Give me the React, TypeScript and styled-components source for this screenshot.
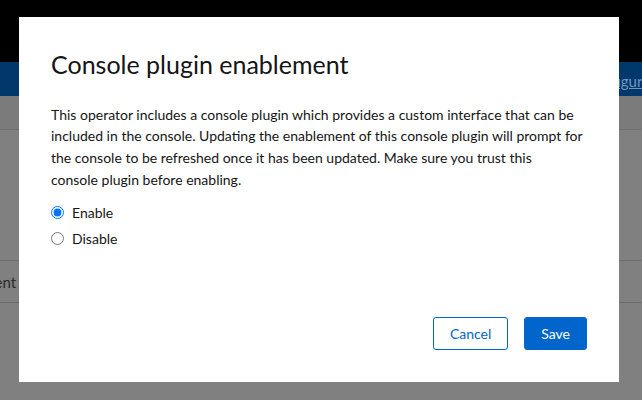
import styled, { createGlobalStyle } from 'styled-components';

const GlobalStyle = createGlobalStyle`
  html, body {
    margin: 0;
    padding: 0;
    height: 100%;
    overflow: hidden;
  }
  body {
    font-family: Lato, "Liberation Sans", sans-serif;
    color: #151515;
    background: #808080;
  }
`;

export default function App() {
  return (
    <>
      <GlobalStyle />
      <Page>
        <Masthead />
        <NavBar>
          <NavLink>Configure</NavLink>
        </NavBar>
        <Toolbar />
        <Spacer />
        <TableRow>
          <Cell>Deployment</Cell>
        </TableRow>
      </Page>

      <Backdrop>
        <Modal role="dialog" aria-labelledby="plugin-title">
          <Title id="plugin-title">Console plugin enablement</Title>
          <Body>
            This operator includes a console plugin which provides a custom
            interface that can be
            <br />
            included in the console. Updating the enablement of this console
            plugin will prompt for
            <br />
            the console to be refreshed once it has been updated. Make sure you
            trust this
            <br />
            console plugin before enabling.
          </Body>
          <RadioGroup>
            <RadioRow>
              <input type="radio" name="enablement" defaultChecked />
              <span>Enable</span>
            </RadioRow>
            <RadioRow>
              <input type="radio" name="enablement" />
              <span>Disable</span>
            </RadioRow>
          </RadioGroup>
          <Footer>
            <Button $variant="secondary">Cancel</Button>
            <Button $variant="primary">Save</Button>
          </Footer>
        </Modal>
      </Backdrop>
    </>
  );
}

const Page = styled.div`
  display: flex;
  flex-direction: column;
  height: 100vh;
  background: #808080;
`;

const Masthead = styled.header`
  height: 62px;
  background: #000;
`;

const NavBar = styled.nav`
  height: 34px;
  background: #00386c;
  display: flex;
  align-items: center;
  justify-content: flex-end;
  overflow: hidden;
`;

const NavLink = styled.a`
  font-size: 15px;
  color: #6f95c0;
  text-decoration: underline;
  margin-right: -8px;
  padding-top: 3px;
`;

const Toolbar = styled.div`
  height: 33px;
  background: #7b7b7b;
  border-bottom: 1px solid #6e6e6e;
`;

const Spacer = styled.div`
  height: 130px;
`;

const TableRow = styled.div`
  height: 41px;
  border-top: 1px solid #6c6c6c;
  border-bottom: 1px solid #6c6c6c;
  display: flex;
  align-items: center;
  overflow: hidden;
`;

const Cell = styled.span`
  font-size: 15px;
  color: #2a2a2a;
  margin-left: -65px;
`;

const Backdrop = styled.div`
  position: fixed;
  inset: 0;
  display: flex;
  align-items: flex-start;
  justify-content: flex-start;
  padding: 17px 0 0 19px;
`;

const Modal = styled.div`
  box-sizing: border-box;
  width: 600px;
  height: 365px;
  padding: 31px 32px 32px;
  background: #fff;
  display: flex;
  flex-direction: column;
`;

const Title = styled.h1`
  margin: 0;
  font-size: 25px;
  line-height: 1.3;
  font-weight: 400;
  color: #151515;
`;

const Body = styled.p`
  margin: 23px 0 0;
  font-size: 14px;
  line-height: 21.7px;
`;

const RadioGroup = styled.div`
  margin-top: 10px;
  display: flex;
  flex-direction: column;
  gap: 2px;
`;

const RadioRow = styled.label`
  display: flex;
  align-items: center;
  gap: 8px;
  height: 24px;
  font-size: 14px;

  input {
    margin: 0;
    width: 13px;
    height: 13px;
  }
`;

const Footer = styled.div`
  margin-top: auto;
  display: flex;
  justify-content: flex-end;
  gap: 16px;
`;

const Button = styled.button<{ $variant: 'primary' | 'secondary' }>`
  font-family: inherit;
  font-size: 14px;
  line-height: 19px;
  padding: 6px 16px;
  border-radius: 3px;
  border: 1px solid #0066cc;
  background: ${(p) => (p.$variant === 'primary' ? '#0066cc' : '#fff')};
  color: ${(p) => (p.$variant === 'primary' ? '#fff' : '#0066cc')};
  cursor: pointer;
`;
